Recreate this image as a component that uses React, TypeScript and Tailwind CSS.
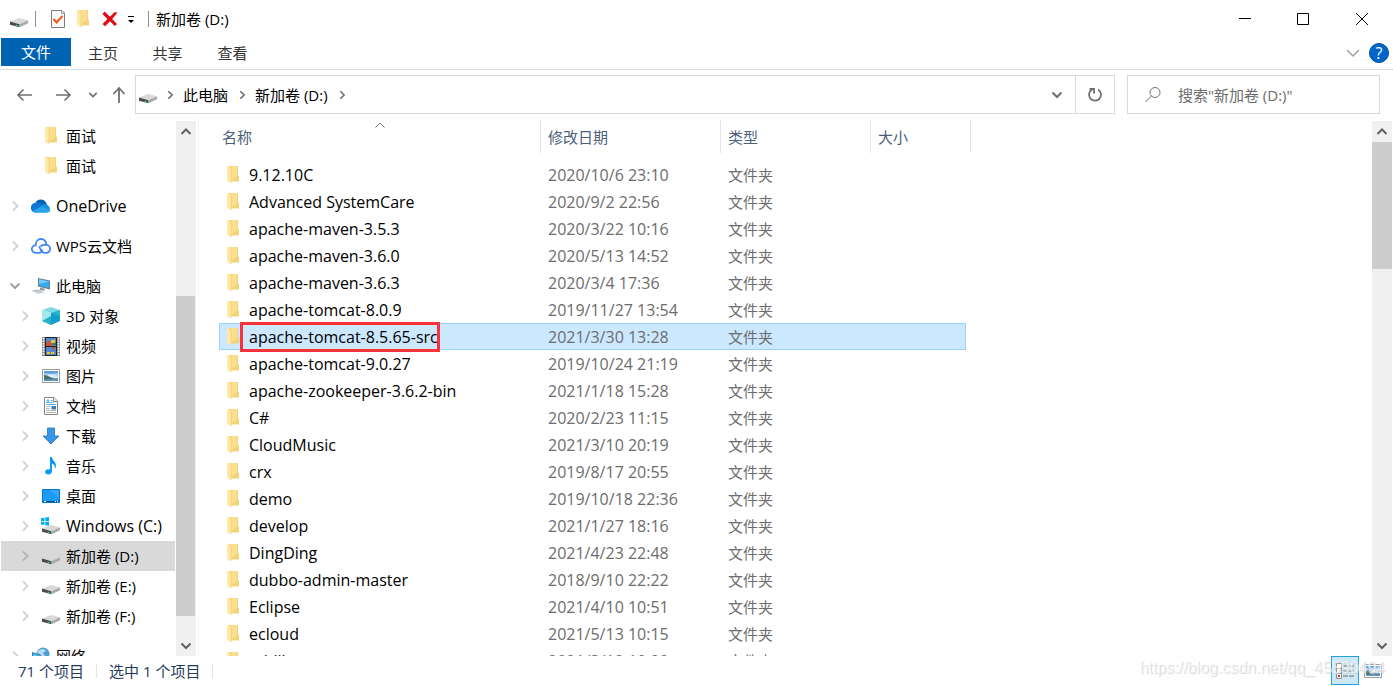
import React from 'react';

type IconName =
    | 'folder' | 'onedrive' | 'wps' | 'pc' | 'cube' | 'video' | 'picture'
    | 'doc' | 'download' | 'music' | 'desktop' | 'windrive' | 'drive' | 'network';

interface NavItem {
    label: string;
    icon: IconName;
    level: 0 | 1;
    arrow?: 'right' | 'down';
    active?: boolean;
    latin?: boolean;
}

const navGroups: NavItem[][] = [
    [
        { label: '面试', icon: 'folder', level: 1 },
        { label: '面试', icon: 'folder', level: 1 },
    ],
    [{ label: 'OneDrive', icon: 'onedrive', level: 0, arrow: 'right', latin: true }],
    [{ label: 'WPS云文档', icon: 'wps', level: 0, arrow: 'right' }],
    [
        { label: '此电脑', icon: 'pc', level: 0, arrow: 'down' },
        { label: '3D 对象', icon: 'cube', level: 1, arrow: 'right' },
        { label: '视频', icon: 'video', level: 1, arrow: 'right' },
        { label: '图片', icon: 'picture', level: 1, arrow: 'right' },
        { label: '文档', icon: 'doc', level: 1, arrow: 'right' },
        { label: '下载', icon: 'download', level: 1, arrow: 'right' },
        { label: '音乐', icon: 'music', level: 1, arrow: 'right' },
        { label: '桌面', icon: 'desktop', level: 1, arrow: 'right' },
        { label: 'Windows (C:)', icon: 'windrive', level: 1, arrow: 'right', latin: true },
        { label: '新加卷 (D:)', icon: 'drive', level: 1, arrow: 'right', active: true },
        { label: '新加卷 (E:)', icon: 'drive', level: 1, arrow: 'right' },
        { label: '新加卷 (F:)', icon: 'drive', level: 1, arrow: 'right' },
    ],
    [{ label: '网络', icon: 'network', level: 0, arrow: 'right' }],
];

const files = [
    { name: '9.12.10C', date: '2020/10/6 23:10' },
    { name: 'Advanced SystemCare', date: '2020/9/2 22:56' },
    { name: 'apache-maven-3.5.3', date: '2020/3/22 10:16' },
    { name: 'apache-maven-3.6.0', date: '2020/5/13 14:52' },
    { name: 'apache-maven-3.6.3', date: '2020/3/4 17:36' },
    { name: 'apache-tomcat-8.0.9', date: '2019/11/27 13:54' },
    { name: 'apache-tomcat-8.5.65-src', date: '2021/3/30 13:28', selected: true },
    { name: 'apache-tomcat-9.0.27', date: '2019/10/24 21:19' },
    { name: 'apache-zookeeper-3.6.2-bin', date: '2021/1/18 15:28' },
    { name: 'C#', date: '2020/2/23 11:15' },
    { name: 'CloudMusic', date: '2021/3/10 20:19' },
    { name: 'crx', date: '2019/8/17 20:55' },
    { name: 'demo', date: '2019/10/18 22:36' },
    { name: 'develop', date: '2021/1/27 18:16' },
    { name: 'DingDing', date: '2021/4/23 22:48' },
    { name: 'dubbo-admin-master', date: '2018/9/10 22:22' },
    { name: 'Eclipse', date: '2021/4/10 10:51' },
    { name: 'ecloud', date: '2021/5/13 10:15' },
    { name: 'eddiba', date: '2021/3/12 10:20' },
];

function Chevron({ dir, className }: { dir: 'up' | 'down' | 'right'; className?: string }) {
    const paths = {
        up: 'M1.5 8 6 3.5 10.5 8',
        down: 'M1.5 3.500 6 8l4.500-4.500',
        right: 'M4 1.500 8.500 6 4 10.500',
    };
    return (
        <svg viewBox="0 0 12 12" className={className} fill="none" stroke="currentColor" strokeWidth="2">
            <path d={paths[dir]} />
        </svg>
    );
}

function Folder() {
    return (
        <svg viewBox="0 0 12 18" className="h-[18px] w-3">
            <path d="M2 0h9v9l1 1v5.500H2z" fill="#f3d37a" />
            <path d="M4 0h6v9.500L4 15z" fill="#fbdf8c" />
            <path d="M0 0h1l3 2.500V17H3l-3-2z" fill="#ffe9a6" />
            <path d="M4 2.500V17" fill="none" stroke="#eecb6c" strokeWidth=".6" />
        </svg>
    );
}

function Drive({ windows = false }: { windows?: boolean }) {
    return (
        <svg viewBox="0 0 20 18" className="h-[18px] w-5">
            {windows && (
                <path d="M0 1.200l3.500-.5V4H0zM4.300.600 8 0v4H4.300zM0 4.800h3.500v3.300L0 7.600zM4.300 4.800H8v4l-3.700-.6z" fill="#00adef" />
            )}
            <path d="M1 11.500 10 8l9 2.200-8.500 4z" fill="#d9d9d9" />
            <path d="M1 11.500l9.500 2.700v3L1 14.700z" fill="#4a4a4a" />
            <path d="M10.500 14.200 19 10.200v3l-8.500 4z" fill="#a9a9a9" />
            <path d="M6.500 14.500l2 .6v1.200l-2-.5z" fill="#35d64b" />
        </svg>
    );
}

function Picture() {
    return (
        <svg viewBox="0 0 18 14" className="h-3.5 w-[18px]">
            <path d="M.5.5h17v13H.5z" fill="#fff" stroke="#9a9a9a" />
            <path d="M2 2h14v10H2z" fill="#a9d3f5" />
            <path d="M2 2h14v2L8 5 2 4z" fill="#5b9fe0" />
            <path d="M5 6.500 8 5l5 1 3 2v1H5z" fill="#dcebf5" />
            <path d="M2 6l3 .5L8 8l4 1.500h4V12H2z" fill="#456f6d" />
            <path d="M2 10.500l14-.8V12H2z" fill="#5f93bd" />
        </svg>
    );
}

function NavIcon({ name }: { name: IconName }) {
    switch (name) {
        case 'folder':
            return <Folder />;
        case 'drive':
            return <Drive />;
        case 'windrive':
            return <Drive windows />;
        case 'picture':
            return <Picture />;
        case 'onedrive':
            return (
                <svg viewBox="0 0 20 14" className="h-3.5 w-5">
                    <path d="M5 12a4 4 0 0 1-.7-8A6 6 0 0 1 15 3.500L17 8l-8 5z" fill="#0364b8" />
                    <path d="M4.500 4.200c1.500-.6 3-.3 4.500.6l5 3L6 13.500H4.500a4.500 4.500 0 0 1 0-9.300z" fill="#0f78d4" />
                    <path d="M9 7.500c1.500-2.500 5-3.500 7-1.500a4 4 0 0 1 .5 7.500H5L4 13z" fill="#1490df" />
                    <path d="M11 7.500l8.500 3.800c-.4 1.300-1.500 2.200-3 2.200H5c-1.300 0-2.500-.6-3.300-1.500z" fill="#28a8ea" />
                </svg>
            );
        case 'wps':
            return (
                <svg viewBox="0 0 20 16" className="h-4 w-5" fill="none" stroke="#4285f4" strokeWidth="1.800">
                    <path d="M8 14.800H4.500A3.700 3.700 0 0 1 4.700 7.300C4.700 3.500 7 1 10 1c3.200 0 5.500 2.400 5.300 5.800a4 4 0 0 1-.3 8h-1.500C10 14.800 10.500 12 8 8.500" />
                    <path d="M9.500 8.500C12 6 15.300 6.800 15.300 6.800M8 14.800c2.500 0 3-1.800 3-3.300" />
                </svg>
            );
        case 'pc':
            return (
                <svg viewBox="0 0 20 18" className="h-[18px] w-5">
                    <path d="M7 1l12 2.500v9L7 9.500z" fill="#6d7b86" />
                    <path d="M8 2.200l10.200 2.200v6.900L8 8.800z" fill="#35a9ee" />
                    <path d="M8 2.200l10.200 2.200L8 7z" fill="#73cafb" />
                    <path d="M9 10.500l5 1.200-1 2-4-.7z" fill="#8f989e" />
                    <path d="M0 13.500l7-1.200 7 3-7 1.700z" fill="#d0d5d9" />
                    <path d="M2 13.800l5-.8 4 2M4 14.800l6-.8" stroke="#aeb5ba" strokeWidth=".6" fill="none" />
                </svg>
            );
        case 'cube':
            return (
                <svg viewBox="0 0 18 18" className="size-[18px]">
                    <path d="M0 3l9-3 9 3-9 3z" fill="#7fdce6" />
                    <path d="M0 3l9 3v12l-9-4z" fill="#a5e8ee" />
                    <path d="M18 3 9 6v12l9-4z" fill="#0e9fcb" />
                    <path d="M9 6l9-3v6z" fill="#2bb5d4" />
                    <path d="M0 14l9-5v9z" fill="#2aafc4" />
                </svg>
            );
        case 'video':
            return (
                <svg viewBox="0 0 18 19" className="h-[19px] w-[18px]">
                    <path d="M0 0h18v19H0z" fill="#8b8b8b" />
                    <path d="M3 0h12v19H3z" fill="#222" />
                    <path d="M1.500 1v17M16.500 1v17" stroke="#fff" strokeWidth="1.600" strokeDasharray="1.500 1" />
                    <path d="M4 1h10v8H4zM4 10h10v8H4z" fill="#5488cf" />
                    <path d="M4 6l3-2 3 3v2H4zM10 10h3l-1 3h-1z" fill="#d64f25" />
                    <path d="M9 3h4v3H9zM5 15h3v2H5zM9 15h3v2H9z" fill="#e8c52c" />
                    <path d="M11 6h3v2h-3z" fill="#3c7c39" />
                </svg>
            );
        case 'doc':
            return (
                <svg viewBox="0 0 16 18" className="h-[18px] w-4">
                    <path d="M1.500.5h9.500l3.500 3.500v13.500h-13z" fill="#fff" stroke="#858585" />
                    <path d="M10.500.5V4.500h4" fill="#e8e8e8" stroke="#858585" />
                    <path d="M3.500 6l1.500-3.500L6.500 6M4 5.500h2M7.500 3.500h2M7.500 5.500h3M3 7.500h10" stroke="#2a93dc" strokeWidth=".8" fill="none" />
                    <path d="M3 9.500h4M3 11.500h4M3 13.500h10M3 15.500h10" stroke="#a3a3a3" strokeWidth=".8" />
                    <path d="M8.500 9H13v3.500H8.500z" fill="#3c7cb5" />
                </svg>
            );
        case 'download':
            return (
                <svg viewBox="0 0 18 18" className="size-[18px]">
                    <path d="M5.500 1h7v8H17l-8 8-8-8h4.500z" fill="#3896e8" stroke="#2474bd" strokeWidth=".8" />
                </svg>
            );
        case 'music':
            return (
                <svg viewBox="0 0 18 18" className="size-[18px]">
                    <path d="M8 0h2c.5 4 4 4.500 4 8.500 0 1.500-.5 2.500-1.500 3.500 1-3-.3-4.500-2.500-5.500V14c0 2-1.500 3.500-3.500 3.500S3 16.500 3 15c0-2 2.500-3.500 5-2.500z" fill="#0c9bf0" />
                </svg>
            );
        case 'desktop':
            return (
                <svg viewBox="0 0 18 14" className="h-3.5 w-[18px]">
                    <path d="M.5.5h17v13H.5z" fill="#1e9bf7" stroke="#0873c4" />
                    <path d="M8 1h9v8z" fill="#41b0ff" opacity=".6" />
                    <path d="M1 12.500h16" stroke="#064f8c" />
                    <path d="M2 12.500h2M13 12.500h1M15 12.500h1" stroke="#fff" />
                </svg>
            );
        case 'network':
            return (
                <svg viewBox="0 0 20 18" className="h-[18px] w-5">
                    <circle cx="12" cy="7" r="6.500" fill="#4c9fd1" />
                    <path d="M8 3c3-2 6-1 7 1l-3 2 2 3-4 2-1-4-3-1z" fill="#b6dcf0" />
                    <path d="M1 5l9 3v9l-9-3z" fill="#267fb7" />
                    <path d="M2 6.500l7 2.300v5.500l-7-2z" fill="#5ec1f1" />
                </svg>
            );
    }
}

function Scrollbar({ children }: { children: React.ReactNode }) {
    return (
        <div className="mt-0.5 flex w-5 shrink-0 flex-col items-center bg-[#f0f0f0] text-[#606060]">
            <button type="button" aria-label="向上滚动" className="flex h-[21px] w-full items-center justify-center">
                <Chevron dir="up" className="size-3" />
            </button>
            <div className="flex w-full grow flex-col">{children}</div>
            <button type="button" aria-label="向下滚动" className="flex h-[21px] w-full items-center justify-center">
                <Chevron dir="down" className="size-3" />
            </button>
        </div>
    );
}

function TitleBar() {
    return (
        <header className="flex h-[38px] shrink-0 items-center pl-[9px]">
            <Drive />
            <span className="ml-1.5 h-4 w-px bg-[#8f8f8f]" />
            <button type="button" aria-label="属性" className="ml-3.5">
                <svg viewBox="0 0 16 18" className="h-[18px] w-4">
                    <path d="M1.500.5H12L14.500 3v14.500h-13z" fill="#f7f8fa" stroke="#7c7c7c" />
                    <path d="M11.500.5v3h3" fill="none" stroke="#a0a0a0" />
                    <path d="M3.500 9l3 3.500 6-6.500" fill="none" stroke="#f15a16" strokeWidth="2" />
                </svg>
            </button>
            <button type="button" aria-label="新建文件夹" className="ml-[11px]">
                <Folder />
            </button>
            <button type="button" aria-label="删除" className="ml-3">
                <svg viewBox="0 0 18 18" className="size-[18px]">
                    <path d="M3.500 1.500 9 6.800l4.500-4.500 3 .2L11.200 9l4.800 5-2.200 2L9 11.200l-5 5L1.500 14l5-5-5-5z" fill="#e50914" />
                </svg>
            </button>
            <button type="button" aria-label="自定义快速访问工具栏" className="ml-2">
                <svg viewBox="0 0 8 8" className="size-2">
                    <path d="M1 1.500h6" stroke="#000" />
                    <path d="M1 5h6L4 8z" fill="#000" />
                </svg>
            </button>
            <span className="ml-[13px] h-4 w-px bg-[#8f8f8f]" />
            <h1 className="ml-[7px] grow">新加卷 (D:)</h1>
            <div className="mr-px flex">
                <button type="button" aria-label="最小化" className="flex w-[58px] justify-center">
                    <svg viewBox="0 0 12 12" className="size-3" stroke="#000"><path d="M0 5.500h12" /></svg>
                </button>
                <button type="button" aria-label="最大化" className="flex w-[58px] justify-center">
                    <svg viewBox="0 0 12 12" className="size-3" fill="none" stroke="#000"><path d="M.5.5h11v11H.5z" /></svg>
                </button>
                <button type="button" aria-label="关闭" className="flex w-[60px] justify-center">
                    <svg viewBox="0 0 12 12" className="size-3" stroke="#000"><path d="M0 0l12 12M12 0 0 12" /></svg>
                </button>
            </div>
        </header>
    );
}

function Ribbon() {
    return (
        <nav className="flex h-8 shrink-0 items-start border-b border-[#dadbdc] pl-px text-[#333]">
            <button type="button" className="h-7 w-[70px] bg-[#0063b1] text-white">文件</button>
            <button type="button" className="h-[30px] w-16">主页</button>
            <button type="button" className="h-[30px] w-[65px]">共享</button>
            <button type="button" className="h-[30px] w-[65px]">查看</button>
            <button type="button" aria-label="展开功能区" className="mt-2 ml-auto">
                <svg viewBox="0 0 14 14" className="size-3.5" fill="none" stroke="#a0a0a0" strokeWidth="1.500"><path d="M1 4l6 6 6-6" /></svg>
            </button>
            <button type="button" aria-label="帮助" className="mt-[5px] mr-1 ml-[9px] size-5 rounded-full border border-[#004e8c] bg-[#0066cc] text-base leading-none font-medium text-white">
                ?
            </button>
        </nav>
    );
}

function AddressBar() {
    return (
        <div className="flex h-[49px] shrink-0 items-center text-[#707070]">
            <div className="flex w-[135px] items-center pl-4">
                <button type="button" aria-label="后退">
                    <svg viewBox="0 0 18 18" className="size-[18px]" fill="none" stroke="currentColor" strokeWidth="1.600"><path d="M16 9H2M7.500 3.500 2 9l5.500 5.500" /></svg>
                </button>
                <button type="button" aria-label="前进" className="ml-5">
                    <svg viewBox="0 0 18 18" className="size-[18px]" fill="none" stroke="currentColor" strokeWidth="1.600"><path d="M2 9h14M10.500 3.500 16 9l-5.500 5.500" /></svg>
                </button>
                <button type="button" aria-label="最近浏览的位置" className="ml-4">
                    <Chevron dir="down" className="size-2.5" />
                </button>
                <button type="button" aria-label="上移" className="ml-3">
                    <svg viewBox="0 0 18 18" className="size-[18px]" fill="none" stroke="currentColor" strokeWidth="1.800"><path d="M9 17V2M3.500 8 9 2l5.500 6" /></svg>
                </button>
            </div>
            <div className="flex h-[39px] grow items-center border border-[#d9d9d9] pl-0.5">
                <Drive />
                <Chevron dir="right" className="ml-[7px] size-2.5" />
                <a href="#pc" className="ml-2 text-black">此电脑</a>
                <Chevron dir="right" className="ml-[9px] size-2.5" />
                <a href="#d" className="ml-2 text-black">新加卷 (D:)</a>
                <Chevron dir="right" className="ml-[9px] size-2.5" />
                <button type="button" aria-label="以前的位置" className="mr-3 ml-auto">
                    <Chevron dir="down" className="size-3" />
                </button>
                <button type="button" aria-label="刷新" className="flex h-full w-[39px] items-center justify-center border-l border-[#d9d9d9]">
                    <svg viewBox="0 0 16 16" className="size-4" fill="none" stroke="currentColor" strokeWidth="1.800">
                        <path d="M11 2.500a6 6 0 1 1-6 0M2.500 2H7v4.500" />
                    </svg>
                </button>
            </div>
            <label className="mr-[13px] ml-3 flex h-[39px] w-[253px] items-center border border-[#d9d9d9] pl-4">
                <svg viewBox="0 0 18 18" className="size-[18px] shrink-0" fill="none" stroke="currentColor">
                    <circle cx="11" cy="6.500" r="5" />
                    <path d="M7.500 10 1.500 16" />
                </svg>
                <input
                    type="text"
                    aria-label="搜索"
                    placeholder={'搜索"新加卷 (D:)"'}
                    className="ml-4 w-full min-w-0 outline-none placeholder:text-[#6d6d6d]"
                />
            </label>
        </div>
    );
}

function Sidebar() {
    return (
        <aside className="flex w-[196px] shrink-0">
            <div className="mt-0.5 mr-px ml-px flex min-w-0 grow flex-col gap-2.5 overflow-hidden">
                {navGroups.map((group, i) => (
                    <ul key={i} className="shrink-0">
                        {group.map((item, j) => (
                            <li key={j}>
                                <a
                                    href="#nav"
                                    className={`flex h-[30px] items-center ${item.level === 1 ? 'pl-[18px]' : 'pl-2'} ${item.active ? 'bg-[#d9d9d9]' : ''}`}
                                >
                                    <span className={`w-3 shrink-0 ${item.arrow === 'down' ? 'text-[#a0a0a0]' : item.active ? 'text-[#b5b5b5]' : 'text-[#d4d4d4]'}`}>
                                        {item.arrow && <Chevron dir={item.arrow} className="size-3" />}
                                    </span>
                                    <span className="ml-2 flex w-6 shrink-0 justify-center">
                                        <NavIcon name={item.icon} />
                                    </span>
                                    <span className={`ml-[3px] whitespace-nowrap ${item.latin ? 'text-base' : ''}`}>{item.label}</span>
                                </a>
                            </li>
                        ))}
                    </ul>
                ))}
            </div>
            <Scrollbar>
                <div className="grow-[154]" />
                <div className="mr-px grow-[320] bg-[#cdcdcd]" />
                <div className="grow-[19]" />
            </Scrollbar>
        </aside>
    );
}

function FileList() {
    return (
        <main className="ml-0.5 min-w-0 grow overflow-hidden border-l border-[#f5f5f5] pl-5">
            <table className="w-[752px] table-fixed border-separate border-spacing-0 text-left">
                <colgroup>
                    <col className="w-[322px]" />
                    <col className="w-[180px]" />
                    <col className="w-[150px]" />
                    <col className="w-[95px]" />
                    <col className="w-[5px]" />
                </colgroup>
                <thead className="text-[#4c607a]">
                    <tr>
                        <th className="p-0 pb-2 font-normal">
                            <div className="relative mt-px flex h-[33px] items-center border-r border-[#e5e5e5] pl-[3px]">
                                名称
                                <svg viewBox="0 0 10 6" className="absolute top-0.5 left-1/2 h-1.5 w-2.5 -translate-x-1/2" fill="none" stroke="#707070">
                                    <path d="M.5 5.500 5 1l4.500 4.500" />
                                </svg>
                            </div>
                        </th>
                        <th className="p-0 pb-2 font-normal">
                            <div className="mt-px flex h-[33px] items-center border-r border-[#e5e5e5] pl-[7px]">修改日期</div>
                        </th>
                        <th className="p-0 pb-2 font-normal">
                            <div className="mt-px flex h-[33px] items-center border-r border-[#e5e5e5] pl-[7px]">类型</div>
                        </th>
                        <th colSpan={2} className="p-0 pb-2 font-normal">
                            <div className="mt-px flex h-[33px] items-center border-r border-[#e5e5e5] pl-[7px]">大小</div>
                        </th>
                    </tr>
                </thead>
                <tbody className="text-[#6d6d6d]">
                    {files.map((file) => {
                        const cell = file.selected ? 'border-y border-[#99d1ff] bg-[#cce8ff]' : '';
                        return (
                            <tr key={file.name} className="h-[27px]">
                                <td className={`p-0 text-base text-black ${cell} ${file.selected ? 'border-l' : ''}`}>
                                    <div className={`relative flex items-center ${file.selected ? 'pl-[7px]' : 'pl-2'}`}>
                                        <Folder />
                                        <span className="ml-2.5">{file.name}</span>
                                        {/* Highlight frame around the selected name */}
                                        {file.selected && (
                                            <span className="absolute -inset-y-[3px] left-5 w-[200px] border-3 border-[#f8333c]" />
                                        )}
                                    </div>
                                </td>
                                <td className={`p-0 pl-[7px] text-base ${cell}`}>{file.date}</td>
                                <td className={`p-0 pl-[7px] ${cell}`}>文件夹</td>
                                <td className={`p-0 ${cell} ${file.selected ? 'border-r' : ''}`} />
                            </tr>
                        );
                    })}
                </tbody>
            </table>
        </main>
    );
}

function StatusBar() {
    return (
        <footer className="relative flex h-[30px] shrink-0 items-center pb-px pl-[18px] text-[#1f3a5f]">
            <span>71 个项目</span>
            <span className="mx-3 h-3.5 w-px bg-[#e5e5e5]" />
            <span>选中 1 个项目</span>
            <span className="ml-3 h-3.5 w-px bg-[#e5e5e5]" />
            <button type="button" aria-label="详细信息" className="ml-auto flex h-[29px] w-7 items-center justify-center border border-[#26a0da] bg-[#cbe8f6]">
                <svg viewBox="0 0 18 16" className="h-4 w-[18px]" fill="none">
                    <path d="M.5.5h5v5h-5zM.5 5.500h5v5h-5zM.5 10.500h5v5h-5z" fill="#fff" stroke="#8c8c8c" />
                    <path d="M7 3h5M13 3h5M7 8h5M13 8h5M7 13h5M13 13h5" stroke="#6b6b6b" />
                    <path d="M2 12h2v2H2z" fill="#c0392b" />
                </svg>
            </button>
            <button type="button" aria-label="大缩略图" className="mr-[11px] ml-[5px]">
                <Picture />
            </button>
            <span className="pointer-events-none absolute top-0 right-2 font-['Liberation_Sans',sans-serif] text-base text-white/60 [text-shadow:1px_1px_1px_#d4d4d4]">
                https://blog.csdn.net/qq_45590494
            </span>
        </footer>
    );
}

export default function App() {
    return (
        <div className="flex h-screen flex-col overflow-hidden bg-white font-['Open_Sans','Noto_Sans_CJK_SC',sans-serif] text-[15px] leading-6 text-black">
            <TitleBar />
            <Ribbon />
            <AddressBar />
            <div className="flex min-h-0 grow">
                <Sidebar />
                <FileList />
                <div className="mr-px flex">
                    <Scrollbar>
                        <div className="grow-[127] bg-[#cdcdcd]" />
                        <div className="grow-[366]" />
                    </Scrollbar>
                </div>
            </div>
            <StatusBar />
        </div>
    );
}
